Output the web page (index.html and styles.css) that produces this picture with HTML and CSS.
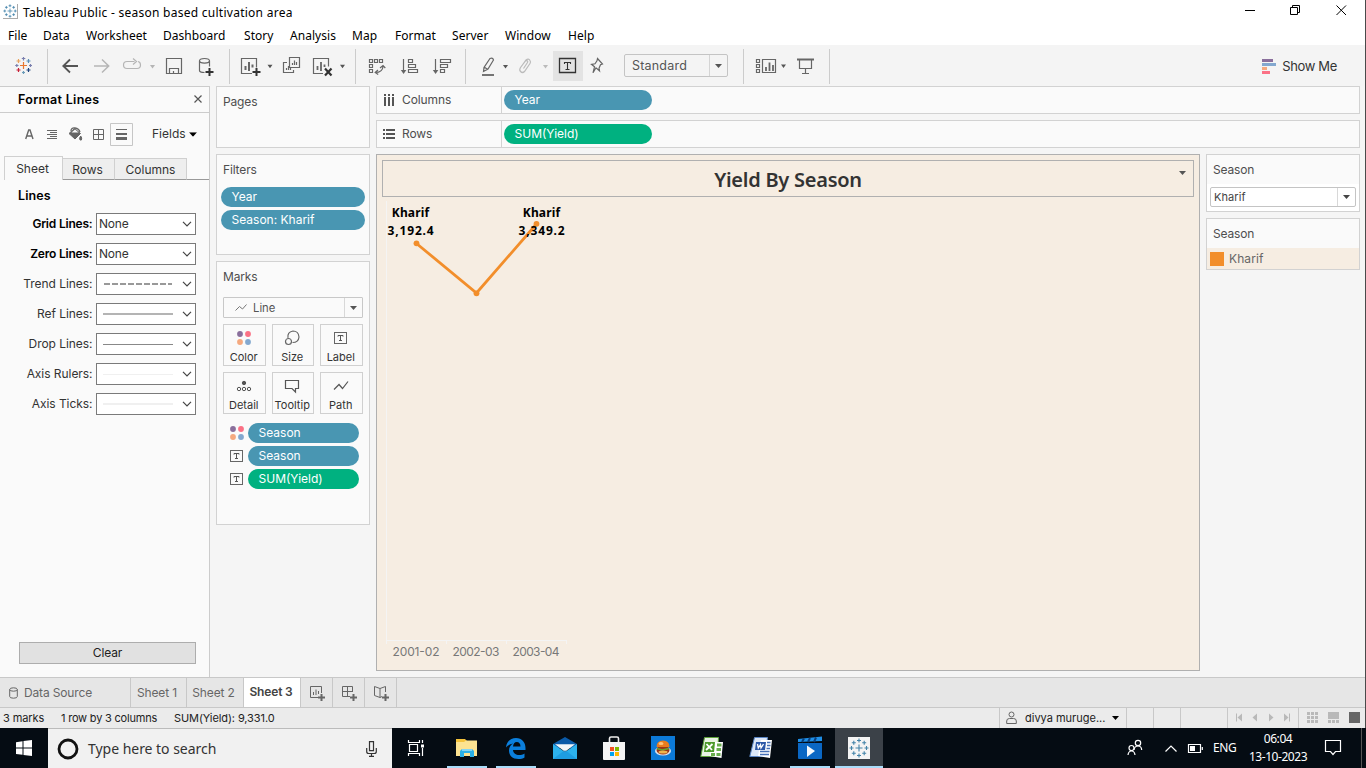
FILE: index.html
```html
<!DOCTYPE html>
<html lang="en">
<head>
<meta charset="utf-8">
<title>Tableau Public - season based cultivation area</title>
<link rel="stylesheet" href="styles.css">
</head>
<body>
<svg class="defs" width="0" height="0">
  <defs>
    <symbol id="caret" viewBox="0 0 7 4"><path d="M0 0h7L3.5 4z" fill="currentColor"/></symbol>
    <symbol id="chev" viewBox="0 0 10 6"><path d="M1 .8l4 4 4-4" fill="none" stroke="#444" stroke-width="1.2"/></symbol>
    <symbol id="dots" viewBox="0 0 14 14"><circle cx="3" cy="3" r="2.9" fill="#8a6f9c"/><circle cx="11" cy="3" r="2.9" fill="#fb7185"/><circle cx="3" cy="11" r="2.9" fill="#f5a97f"/><circle cx="11" cy="11" r="2.9" fill="#83a8cf"/></symbol>
    <symbol id="tbox" viewBox="0 0 13 12"><rect x=".5" y=".5" width="12" height="11" fill="none" stroke="#666"/><path d="M4 4.6V3.5h5v1.1M6.5 3.5v5M5 8.500h3" fill="none" stroke="#555"/></symbol>
    <symbol id="spark" viewBox="0 0 20 20">
      <path d="M10 6.500v7M6.500 10h7M10 .5v4M8 2.500h4M10 15.500v4M8 17.500h4M.5 10h4M2.500 8v4M15.500 10h4M17.500 8v4M4.800 2.800v4M2.800 4.800h4M15.200 2.800v4M13.200 4.800h4M4.800 13.200v4M2.800 15.200h4M15.200 13.200v4M13.200 15.200h4" fill="none" stroke="currentColor" stroke-width="1.100"/>
    </symbol>
  </defs>
</svg>
<div class="app">
  <header class="titlebar">
    <span class="app-icon"><svg width="14" height="14"><use href="#spark"/></svg></span>
    <span class="app-title">Tableau Public - season based cultivation area</span>
    <svg class="win-ctl" width="120" height="24" viewBox="1240 0 120 24" fill="none" stroke="#000">
      <path d="M1245 10.500h10"/>
      <path d="M1290.500 7.500h7v7h-7zM1292.500 7.500v-2h7v7h-2"/>
      <path d="M1336.500 5.500l9.500 9.500M1346 5.500l-9.500 9.500"/>
    </svg>
  </header>
  <nav class="menubar">
    <span class="m1">File</span><span class="m2">Data</span><span class="m3">Worksheet</span><span class="m4">Dashboard</span><span class="m5">Story</span><span class="m6">Analysis</span><span class="m7">Map</span><span class="m8">Format</span><span class="m9">Server</span><span class="m10">Window</span><span class="m11">Help</span>
  </nav>
  <div class="toolbar">
    <div class="group">
      <svg width="47" height="34" viewBox="0 49 47 34" fill="none" stroke-width="1.200">
        <path d="M23.500 62v7M20 65.500h7" stroke="#e8762d"/>
        <path d="M23.500 57v3.500M21.800 58.500h3.500M15.200 65.500h3.300M16.800 64v3M29 65.500h3M30.500 64v3" stroke="#7a7fae"/>
        <path d="M18.500 59v4M16.500 61h4" stroke="#e8a25d"/>
        <path d="M28.500 59v4M26.500 61h4" stroke="#5b8fb5"/>
        <path d="M18.500 68v4M16.500 70h4" stroke="#c72037"/>
        <path d="M28.500 68v4M26.500 70h4" stroke="#1f447e"/>
        <path d="M23.500 71v3M22 72.500h3" stroke="#6b9bb8"/>
      </svg>
    </div>
    <div class="group">
      <svg width="181" height="34" viewBox="48 49 181 34" fill="none" stroke="#666" stroke-width="1.200">
        <path d="M78 66H63.500M70 59.500L63.300 66l6.700 6.500" stroke="#555" stroke-width="1.800"/>
        <path d="M94 66h14.500M102 59.500l6.700 6.500-6.700 6.500" stroke="#b5b5b5" stroke-width="1.500"/>
        <path d="M131 61.500h-4q-3.500 0-3.500 3.500t3.500 3.500h10q3.500 0 3.500-3.500 0-3-2.500-3.500M131 61.500h3.500M133 58.500l3.500 3-3.500 3" stroke="#b5b5b5"/>
        <path d="M150 65h5l-2.500 3.500z" fill="#b5b5b5" stroke="none"/>
        <path d="M166.500 58.500h15v15h-15zM169.500 73.500v-5h9v5M173.500 73v-2"/>
        <ellipse cx="204.500" cy="60.800" rx="5" ry="2.300"/><path d="M199.500 61v9.500q0 2 5 2M209.500 61v5.500"/>
        <path d="M209.500 68v8M205.500 72h8" stroke="#333" stroke-width="2"/>
      </svg>
    </div>
    <div class="group">
      <svg width="125" height="34" viewBox="230 49 125 34" fill="none" stroke="#666" stroke-width="1.200">
        <path d="M252 73.500h-10.500v-15h15v9"/><path d="M245.500 66v4M249 62v9M252.500 64.500v3" stroke-width="2"/>
        <path d="M256.500 68v8M252.500 72h8" stroke="#333" stroke-width="2"/>
        <path d="M267.500 64.800h5l-2.500 3.500zM340 64.800h5l-2.500 3.500z" fill="#555" stroke="none"/>
        <path d="M289.500 57.500h10v10h-10zM287 62.500h-3.500v10h10V70M292.500 65v-2M294.500 65v-4.500M296.500 65v-3M286.500 70v-2M288.500 70v-4M290.500 70v-3"/>
        <path d="M323 73.500h-9.500v-15h15v8"/><path d="M317.500 66v4M321 62v9M324.500 64.500v2.500" stroke-width="1.800"/>
        <path d="M325 68.500l6.500 7M331.500 68.500l-6.500 7" stroke="#333" stroke-width="2.200"/>
      </svg>
    </div>
    <div class="group">
      <svg width="109" height="34" viewBox="356 49 109 34" fill="none" stroke="#666" stroke-width="1.200">
        <path d="M369.500 59.500h3v3h-3zM374.500 59.500h3v3h-3zM379.500 59.500h3v3h-3zM369.500 64.500h3v3h-3zM369.500 69.500h3v3h-3zM375.500 72.500q7 0 7.500-6M378 70l-2.800 2.500 3 2M380 68l3-2.500 2.300 2.500"/>
        <path d="M403.500 59v13M408.500 59.500h4v3h-4zM408.500 64.500h7v3h-7zM408.500 69.500h9v3h-9z"/><path d="M400.800 70h5.500l-2.700 4z" fill="#666" stroke="none"/>
        <path d="M435.500 59v13M440.500 59.500h10v3h-10zM440.500 64.500h7v3h-7zM440.500 69.500h4v3h-4z"/><path d="M432.800 70h5.500l-2.700 4z" fill="#666" stroke="none"/>
      </svg>
    </div>
    <div class="group marks-group">
      <svg width="152" height="34" viewBox="466 49 152 34" fill="none" stroke="#666" stroke-width="1.200">
        <path d="M553 51h30v30h-30z" fill="#e3e3e3" stroke="none"/>
        <path d="M483.500 71.500l.5-4 6-9q3-1 3.500 1.500l-5.500 9zM484 67l4 2.500"/>
        <path d="M482 75h12" stroke-width="1.800"/>
        <path d="M503 65h5l-2.500 3.500z" fill="#555" stroke="none"/>
        <path d="M521 67l5-7q2.500-2 4 .5 1 1.500 0 3l-5.500 8q-2 2-4 0-1.500-1.500 0-4l5-6.500q1-1 2 0 .5.800 0 1.500l-4 6" stroke="#bbb"/>
        <path d="M543 65h5l-2.500 3.500z" fill="#bbb" stroke="none"/>
        <path d="M559.500 58.500h16v14h-16z" stroke="#333" stroke-width="1.300"/>
        <path d="M564.500 64v-1.500h6V64M567.500 62.500v7M565.500 69.500h4" stroke="#333" stroke-width="1.100"/>
        <path d="M597.500 58.500l5 5.500-2 .8-1.500 3.500.5 2.500-3.500-3-3 5 1.500-6-3-2.500 3.500-.5 2-3z"/>
      </svg>
      <div class="fit"><span>Standard</span><i><svg width="7" height="4"><use href="#caret"/></svg></i></div>
    </div>
    <div class="group">
      <svg width="85" height="34" viewBox="744 49 85 34" fill="none" stroke="#666" stroke-width="1.200">
        <path d="M756.500 59.500h3v3h-3zM756.500 64.500h3v3h-3zM756.500 69.500h3v3h-3zM762.500 59.500h13v13h-13z"/><path d="M766 67v4M769.500 62.500V71M773 65v6" stroke-width="1.800"/>
        <path d="M781 64.500h5l-2.500 3.500z" fill="#555" stroke="none"/>
        <path d="M797 59.500h17" stroke-width="2"/><path d="M799.500 60v8.500h12V60M805.500 69v4M802 73.500h7"/>
      </svg>
    </div>
    <div class="showme">
      <svg width="14" height="15"><path fill="#8a6f9c" d="M0 0h11v3H0z"/><path fill="#83a8cf" d="M0 4h14v3H0z"/><path fill="#f5a97f" d="M0 8h5v3H0z"/><path fill="#fb7185" d="M0 12h8v3H0z"/></svg>
      <span>Show Me</span>
    </div>
  </div>

  <main class="work">
    <aside class="format">
      <div class="format-head"><b>Format Lines</b><svg width="8" height="8"><path d="M.5.5l7 7M7.500.5l-7 7" stroke="#555" stroke-width="1.200"/></svg></div>
      <div class="format-tools">
        <svg width="134" height="23" viewBox="0 123 134 23" fill="none" stroke="#666">
          <path d="M25.700 139l3-9h1.300l3 9M26.800 136h5" stroke-width="1.400"/>
          <path d="M47 130.500h10M50 132.500h7M47 134.500h10M50 136.500h7M47 138.500h10" stroke-width="1"/>
          <path d="M69 133.500l5.500-5 6 5-5.500 5.500z" fill="#666"/><path d="M71 131q0-3.500 4-3t5 4" stroke-width="1.300"/><path d="M71.500 132.500l3.500-3 3.500 3z" fill="#fafafa" stroke="none"/><path d="M80 140q-1-2 .7-4 1.700 2 .7 4z" fill="#666"/>
          <path d="M93.500 129.500h10v10h-10zM98.500 129.500v10M93.500 134.500h10"/>
          <path d="M110.500 123.500h22v22h-22z" stroke="#c6c6c6"/>
          <path d="M116 129.500h11" stroke-width="1"/><path d="M116 134h11" stroke-width="2"/><path d="M116 138.500h11" stroke-width="3"/>
        </svg>
        <span class="fields">Fields</span><svg width="8" height="5" viewBox="0 0 7 4"><use href="#caret"/></svg>
      </div>
      <div class="format-tabs"><span class="on">Sheet</span><span class="t2">Rows</span><span class="t3">Columns</span><em></em></div>
      <h3>Lines</h3>
      <div class="line-row"><label class="b">Grid Lines:</label><div class="combo"><span>None</span><svg width="10" height="6"><use href="#chev"/></svg></div></div>
      <div class="line-row"><label class="b">Zero Lines:</label><div class="combo"><span>None</span><svg width="10" height="6"><use href="#chev"/></svg></div></div>
      <div class="line-row"><label>Trend Lines:</label><div class="combo"><hr class="dash"><svg width="10" height="6"><use href="#chev"/></svg></div></div>
      <div class="line-row"><label>Ref Lines:</label><div class="combo"><hr class="ref"><svg width="10" height="6"><use href="#chev"/></svg></div></div>
      <div class="line-row"><label>Drop Lines:</label><div class="combo"><hr class="drop"><svg width="10" height="6"><use href="#chev"/></svg></div></div>
      <div class="line-row"><label>Axis Rulers:</label><div class="combo"><hr class="rule"><svg width="10" height="6"><use href="#chev"/></svg></div></div>
      <div class="line-row"><label>Axis Ticks:</label><div class="combo"><hr class="tick"><svg width="10" height="6"><use href="#chev"/></svg></div></div>
      <button class="clear">Clear</button>
    </aside>

    <section class="cards">
      <div class="card pages"><h4>Pages</h4></div>
      <div class="card filters"><h4>Filters</h4><div class="pill">Year</div><div class="pill">Season: Kharif</div></div>
      <div class="card marks">
        <h4>Marks</h4>
        <div class="mark-type"><svg width="12" height="9"><path d="M.5 7.500l4-4 3 2.500 4-4.500" fill="none" stroke="#777"/></svg><span>Line</span><i><svg width="7" height="4"><use href="#caret"/></svg></i></div>
        <div class="mark-grid">
          <div><svg width="16" height="16" viewBox="-1 -1 16 16"><use href="#dots" width="14" height="14"/></svg><span>Color</span></div>
          <div><svg width="16" height="16" fill="none" stroke="#666" stroke-width="1.200"><path d="M4 7.800q-1-5.500 5-6.800 5.500 0 6 6-.5 5.500-6.500 5.500M1.500 11.500a3 3 0 0 0 6 0 3 3 0 0 0-6 0z"/></svg><span>Size</span></div>
          <div><svg width="13" height="16" viewBox="0 -2 13 16"><use href="#tbox" width="13" height="12"/></svg><span>Label</span></div>
          <div><svg width="16" height="16" fill="none" stroke="#555"><circle cx="8" cy="5" r="1.700" fill="#555"/><circle cx="3" cy="11" r="1.700"/><circle cx="8" cy="11" r="1.700"/><circle cx="13" cy="11" r="1.700"/></svg><span>Detail</span></div>
          <div><svg width="16" height="16" fill="none" stroke="#555" stroke-width="1.200"><path d="M1.500 2.500h13v8h-3v3.500l-3.500-3.500H1.500z"/></svg><span>Tooltip</span></div>
          <div><svg width="16" height="16" fill="none" stroke="#555" stroke-width="1.200"><path d="M1 11.500l5-5 3.500 4 5.500-7"/></svg><span>Path</span></div>
        </div>
        <div class="mark-row"><svg width="14" height="14"><use href="#dots"/></svg><div class="pill">Season</div></div>
        <div class="mark-row"><svg width="14" height="12"><use href="#tbox" width="13"/></svg><div class="pill">Season</div></div>
        <div class="mark-row"><svg width="14" height="12"><use href="#tbox" width="13"/></svg><div class="pill green">SUM(Yield)</div></div>
      </div>
    </section>

    <section class="sheet">
      <div class="shelf"><div class="shelf-name"><svg width="14" height="12" fill="#555"><path d="M2 0h2v2H2zM6 0h2v2H6zM10 0h2v2h-2zM2 3h2v9H2zM6 3h2v9H6zM10 3h2v9h-2z"/></svg><span>Columns</span></div><div class="pill">Year</div></div>
      <div class="shelf"><div class="shelf-name"><svg width="14" height="12" fill="#555"><path d="M1 1h2v2H1zM1 5h2v2H1zM1 9h2v2H1zM4 1h9v2H4zM4 5h9v2H4zM4 9h9v2H4z"/></svg><span>Rows</span></div><div class="pill green">SUM(Yield)</div></div>
      <div class="sheet-body">
        <div class="viz">
          <div class="viz-title"><h1>Yield By Season</h1><svg class="viz-caret" width="7" height="4"><use href="#caret"/></svg></div>
          <svg class="chart" width="812" height="466" viewBox="382 198 812 466">
            <path d="M386.500 201v443M386 640.500h181M446.500 641v3M506.500 641v3M566.500 641v3" stroke="#f4f4f4" fill="none"/>
            <path d="M416.500 243.500l60 49.500 60-69" fill="none" stroke="#f28e2b" stroke-width="2.800"/>
            <g fill="#f28e2b"><circle cx="416.500" cy="243.300" r="2.900"/><circle cx="476.500" cy="293.300" r="2.900"/><circle cx="536.500" cy="223.800" r="2.900"/></g>
            <g class="val" text-anchor="middle"><text x="410.500" y="217">Kharif</text><text class="num" x="411" y="235">3,192.4</text><text x="541.500" y="217">Kharif</text><text class="num" x="542" y="235">3,349.2</text></g>
            <g class="axis"><text x="392.500" y="656" textLength="47">2001-02</text><text x="452.500" y="656" textLength="47">2002-03</text><text x="512.500" y="656" textLength="47">2003-04</text></g>
          </svg>
        </div>
        <div class="side">
          <div class="card filter-card"><h4>Season</h4><div class="pick-wrap"><div class="pick"><span>Kharif</span><i><svg width="7" height="4"><use href="#caret"/></svg></i></div></div></div>
          <div class="card legend"><h4>Season</h4><div class="legend-row"><i></i><span>Kharif</span></div></div>
        </div>
      </div>
    </section>
  </main>

  <div class="tabs">
    <span class="ds"><svg width="9" height="12" fill="none" stroke="#666"><ellipse cx="4.500" cy="2.500" rx="3.800" ry="1.700"/><path d="M.7 2.500v7q0 1.700 3.800 1.700t3.800-1.700v-7"/></svg>Data Source</span><span class="s1">Sheet 1</span><span class="s2">Sheet 2</span><span class="s3">Sheet 3</span>
    <span class="ico"><svg width="18" height="17" fill="none" stroke="#666"><path d="M11 12.500H1.500v-11h11V8M4.500 7v3M7 4.500V10M9.500 6v3"/><path d="M12.500 9v7M9 12.500h7" stroke-width="2"/></svg></span>
    <span class="ico"><svg width="18" height="17" fill="none" stroke="#666"><path d="M9 11.500H1.500v-10h10V7M6.500 1.500v10M1.500 6.500h10"/><path d="M12.500 9v7M9 12.500h7" stroke-width="2"/></svg></span>
    <span class="ico"><svg width="18" height="17" fill="none" stroke="#666"><path d="M9 11.500l-2 1-5.500-2v-9l5.500 2 5.500-2V7M7 3.500v9"/><path d="M12.500 9v7M9 12.500h7" stroke-width="2"/></svg></span>
  </div>
  <footer class="status">
    <span class="st1">3 marks</span><span class="st2">1 row by 3 columns</span><span class="st3">SUM(Yield): 9,331.0</span>
    <div class="user"><svg width="11" height="14" fill="none" stroke="#666"><circle cx="5.500" cy="3.500" r="2.500"/><path d="M.7 12.500V10q0-2.500 2.800-2.500h4q2.800 0 2.800 2.500v2.500z"/></svg><span>divya muruge...</span><svg width="7" height="4"><use href="#caret"/></svg></div>
    <div class="cell"></div><div class="cell"></div><div class="cell wide"></div>
    <svg width="70" height="20" viewBox="1228 708 70 20" fill="#b9b9b9"><path d="M1236 713.500h1v8h-1zM1242 713.500v8l-4.500-4zM1257 713.500v8l-4.500-4zM1269 713.500v8l4.500-4zM1284 713.500v8l4.500-4zM1289 713.500h1v8h-1z"/></svg>
    <div class="views"><svg width="66" height="20" viewBox="1299 708 66 20" fill="#b9b9b9"><path d="M1307 712h3v3h-3zM1311 712h3v3h-3zM1315 712h3v3h-3zM1307 716h3v3h-3zM1311 716h3v3h-3zM1315 716h3v3h-3zM1307 720h3v3h-3zM1311 720h3v3h-3zM1315 720h3v3h-3zM1328 712h11v7h-11zM1328 720h3v3h-3zM1332 720h3v3h-3zM1336 720h3v3h-3z"/><path fill="#666" d="M1349 712h11v11h-11z"/></svg></div>
  </footer>
</div>

<div class="taskbar">
  <div class="start"><svg width="16" height="16" fill="#fff"><path d="M0 2.200l6.500-1v6.300H0zM7.500 1l8.500-1v7.500H7.500zM0 8.500h6.500v6.300L0 14zM7.500 8.500H16V16l-8.500-1.100z"/></svg></div>
  <div class="search"><svg width="22" height="22"><circle cx="11" cy="11" r="9" fill="none" stroke="#111" stroke-width="2.800"/></svg><span>Type here to search</span><svg width="11" height="16" fill="none" stroke="#333" stroke-width="1.200"><path d="M3.500.7h4v9h-4zM.7 7v3.500q0 2 2 2h5.600q2 0 2-2V7M5.500 12.500V15M3 15.300h5"/></svg></div>
  <div class="tb first"><svg width="18" height="16" fill="none" stroke="#fff" stroke-width="1.200"><path d="M2.500 4.500h8v7h-8zM1.500 0v2.500h11V0M1.500 16v-2.500h11V16M15.500 0v3M15.500 8v8"/><path d="M14 4.500h3v3h-3z" fill="#fff" stroke="none"/></svg></div>
  <div class="tb run"><svg width="24" height="20"><path fill="#f5c33b" d="M1 1h9l2 2h10v5H1z"/><path fill="#fde391" d="M1 4h8l2-1.500h11V18H1z"/><path fill="#2bb0e6" d="M5 19v-6l2-2h10l2 2v6h-4v-4H9v4z"/><path fill="#85d5f3" d="M7 11h10v2H7z"/></svg></div>
  <div class="tb run"><svg width="22" height="22"><path fill="#0b7fdc" d="M1 10.500C1.500 4.500 5.500 1 11 1c6 0 9.500 4.500 9.500 10v2H8c.3 3.500 3 5 6 5 2 0 4-.6 5.500-1.600v4C18 21.500 15.800 22 13.500 22 7.500 22 4 18.500 4 13.500c0-3 1.500-5.500 4-7-3 .5-5.500 2-7 4zM8 9.500h7.500c0-3-1.500-4.500-3.700-4.500C9.500 5 8.300 7 8 9.500z"/></svg></div>
  <div class="tb"><svg width="24" height="24"><path fill="#0a5aa8" d="M0 8L12 1l12 7v4H0z"/><path fill="#2cb1ec" d="M0 8l12 8 12-8v15H0z"/><path fill="#f3f6f9" d="M2 8.300h20l-10 7.500z"/><path fill="#1690da" d="M0 23l12-9 12 9z" opacity=".6"/></svg></div>
  <div class="tb"><svg width="24" height="26"><path d="M7.500 7V3.500q0-1.500 1.500-1.500h6q1.500 0 1.500 1.500V7" fill="none" stroke="#eee" stroke-width="1.600"/><path fill="#f4f4f4" d="M1 7h22v17q0 1-1 1H2q-1 0-1-1z"/><path fill="#f25022" d="M8 12h4v4H8z"/><path fill="#7fba00" d="M13 12h4v4h-4z"/><path fill="#00a4ef" d="M8 17h4v4H8z"/><path fill="#ffb900" d="M13 17h4v4h-4z"/></svg></div>
  <div class="tb"><svg width="24" height="24"><path fill="#0c7ad8" d="M0 0h24v24H0z"/><ellipse cx="12" cy="15" rx="8" ry="4.500" fill="#dfe5ee"/><ellipse cx="12" cy="14" rx="6.500" ry="4.500" fill="#9a3417"/><path fill="#e87c1e" d="M5.500 11q0-6.500 6.500-6.500t6.500 6.500z"/><ellipse cx="10" cy="7.500" rx="2.500" ry="1.500" fill="#ffc27a"/><path d="M6 12.500l5 1.500 7-1.500" fill="none" stroke="#6aa52c" stroke-width="1.400"/><ellipse cx="12" cy="16" rx="4.500" ry="1.500" fill="#efb34d"/></svg></div>
  <div class="tb"><svg width="24" height="24"><path fill="#e9f3e4" stroke="#5ea33a" d="M4.500 1.500h14l-1 19H.8z"/><path fill="#fff" d="M15 6h8l-1.500 16-12-2 1-5h4z"/><path fill="#4c9a2a" d="M5 6h10l-1 10H4z"/><path d="M6.500 8l5.500 6M12.500 8L6 14" stroke="#fff" stroke-width="1.800"/><path d="M17 7.500h4.500v3H17zM16.500 12H21v3h-4.500zM11 17h4v3h-4zM16.500 17h4v3h-4z" fill="#69ad4e"/></svg></div>
  <div class="tb"><svg width="24" height="24"><path fill="#dce7f7" stroke="#5b86c5" d="M5.500 1.500h13l-2 19H.8z"/><path fill="#fff" d="M12 4h11l-2 18-12-2z"/><path fill="#2b57a7" d="M7 6h10l-1 8H6z"/><path d="M8.500 8l.8 4 2.200-3.500.5 3.500 2.500-4" fill="none" stroke="#fff" stroke-width="1.300"/><path d="M18 6.500h3.500M18 9.500h3.500M17.500 12.500H21M11 15.500h9.500M11 18.500h9" stroke="#456fb6" stroke-width="1.500"/></svg></div>
  <div class="tb run"><svg width="24" height="24"><path fill="#0a67c4" d="M0 7h24v15q0 1-1 1H1q-1 0-1-1z"/><path fill="#1f8fe6" d="M0 3l24-2.500V5L0 6z"/><path d="M6 2.500L4 6M12 2L10 6M18 1.500L16 6" stroke="#0a3f7d" stroke-width="2"/><path fill="#f5f9fd" d="M9 9.500l8 5.500-8 6z"/></svg></div>
  <div class="tb run active"><span><svg width="20" height="20"><use href="#spark"/></svg></span></div>
  <svg class="tray" width="90" height="40" viewBox="1120 728 90 40" fill="none" stroke="#fff" stroke-width="1.200">
    <circle cx="1138" cy="743" r="2.700"/><path d="M1134 750q.5-4 4-4t3.700 4"/><circle cx="1131.500" cy="748" r="2.500"/><path d="M1128 755q.5-4 3.500-4t3.500 4"/>
    <path d="M1165.500 751.500l5.500-5.500 5.500 5.500"/>
    <path d="M1188.500 744.500h12v8h-12zM1202.300 747v3"/><path d="M1190 746h5v5h-5z" fill="#fff" stroke="none"/>
  </svg>
  <span class="lang">ENG</span>
  <div class="clock"><span>06:04</span><span>13-10-2023</span></div>
  <svg class="note" width="18" height="17" fill="none" stroke="#fff" stroke-width="1.200"><path d="M1.500 1.500h15v11h-5l-2.500 3-2.500-3h-5z"/></svg>
  <i class="peek"></i>
</div>
</body>
</html>
```
FILE: styles.css
```css
* { box-sizing: border-box; }
body { margin: 0; width: 1366px; height: 768px; overflow: hidden; font: 12px/16px Inter, "Noto Sans", sans-serif; color: #333; background: #f5f5f5; }
svg { display: block; flex: none; }
span, b, label { white-space: nowrap; }
i { font-style: normal; }
.defs { display: none; }
.app { height: 728px; display: flex; flex-direction: column; border-right: 1px solid #4a4a4a; }

.titlebar { height: 24px; background: #fff; display: flex; align-items: center; padding-left: 3px; font: 12px/16px "Noto Sans", sans-serif; color: #000; }
.app-icon { width: 15px; height: 15px; border: solid #aaa; border-width: 0 1px 1px 0; color: #3d80a8; margin-top: -1px; }
.app-title { margin-left: 5px; padding-top: 1px; letter-spacing: .26px; }
.win-ctl { margin-left: auto; margin-right: 5px; }
.menubar { height: 21px; background: #fff; display: flex; padding: 4px 0 0 8px; font: 12px/16px "Noto Sans", sans-serif; color: #000; letter-spacing: .04px; }
.m1 { width: 35px; } .m2 { width: 43px; } .m3 { width: 77px; } .m4 { width: 81px; } .m5 { width: 46px; } .m6 { width: 62px; } .m7 { width: 43px; } .m8 { width: 57px; } .m9 { width: 53px; } .m10 { width: 63px; }

.toolbar { height: 41px; background: #f4f4f4; display: flex; padding-top: 4px; }
.group { height: 35px; border-right: 1px solid #ccc; display: flex; }
.marks-group { width: 278px; }
.fit { width: 104px; height: 23px; margin: 5px 0 0 6px; border: 1px solid #c4c4c4; border-radius: 2px; display: flex; color: #555; }
.fit span { flex: 1; padding: 3px 0 0 7px; font-size: 12.5px; letter-spacing: .2px; }
.fit i { width: 18px; border-left: 1px solid #d4d4d4; display: grid; place-items: center; }
.showme { margin-left: auto; margin-right: 28px; display: flex; height: 34px; align-items: center; gap: 6px; font-size: 13px; letter-spacing: -.35px; }

.work { height: 591px; display: flex; }
.format { width: 210px; background: #fafafa; border: 1px solid #ccc; border-left: 0; border-bottom: 0; display: flex; flex-direction: column; color: #333; }
.format-head { height: 26px; display: flex; align-items: center; justify-content: space-between; padding: 0 7px 1px 18px; border-bottom: 1px solid #ccc; color: #000; }
.format-head b { font-weight: 600; font-size: 12.5px; letter-spacing: .3px; padding-top: 1px; }
.format-tools { display: flex; height: 43px; padding-top: 10px; }
.fields { margin: 3px 3px 0 18px; }
.format-tools > svg:last-child { margin-top: 9px; color: #000; }
.format-tabs { display: flex; height: 24px; align-items: flex-end; padding-left: 4px; font-size: 12px; }
.format-tabs span { height: 22px; border: 1px solid #d0d0d0; border-width: 1px 1px 1px 0; border-bottom-color: #999; background: #eee; text-align: center; line-height: 22px; width: 72px; }
.format-tabs .on { height: 24px; width: 59px; border-width: 1px 1px 0; background: #fafafa; line-height: 24px; padding-right: 2px; }
.format-tabs .t2 { width: 52px; padding-right: 2px; }
.format-tabs em { flex: 1; border-bottom: 1px solid #999; }
.format h3 { margin: 7px 0 9px 18px; font: 600 12.5px/17px Inter, sans-serif; color: #000; letter-spacing: .1px; }
.line-row { display: flex; height: 22px; margin-bottom: 8px; justify-content: flex-end; align-items: center; gap: 4px; padding-right: 13px; letter-spacing: -.05px; }
.line-row .b { font-weight: 600; color: #000; letter-spacing: -.2px; }
.line-row label { margin-right: -.5px; }
.combo { width: 100px; height: 22px; border: 1px solid #7a7a7a; background: #fff; display: flex; align-items: center; justify-content: space-between; padding: 0 3px 0 2px; letter-spacing: -.2px; }
.combo hr { width: 70px; height: 0; margin: 0 0 0 4px; border: 0; border-top: 1px solid #888; }
.combo .dash { height: 2px; border: 0; width: 68px; margin-left: 5px; background: repeating-linear-gradient(90deg, #999 0 6px, #fff 6px 8px); }
.combo .ref { border-top: 2px solid #b4b4b4; }
.combo .rule, .combo .tick { border-color: #f0f0f0; }
.combo .tick { border-width: 2px; }
.clear { margin: auto 13px 13px 19px; height: 22px; border: 1px solid #adadad; background: #e1e1e1; font: 12px/16px Inter, sans-serif; color: #222; padding: 0; letter-spacing: -.1px; }

.cards { margin-left: 6px; width: 154px; display: flex; flex-direction: column; gap: 6px; }
.card { background: #fafafa; border: 1px solid #d2d2d2; }
h4 { margin: 0; font: 12px/16px Inter, sans-serif; color: #4e4e4e; padding: 7px 0 0 6px; letter-spacing: -.15px; }
.pages { height: 62px; }
.filters { height: 101px; padding: 0 4px; }
.filters h4 { padding: 7px 0 9px 2px; }
.pill { height: 20px; border-radius: 10px; background: #4996b2; color: #fff; line-height: 20px; padding-left: 10.5px; white-space: nowrap; letter-spacing: 0; }
.filters .pill { margin-bottom: 3px; }
.pill.green { background: #00b180; }
.marks { height: 264px; }
.mark-type { margin: 12px 6px 6px; height: 21px; border: 1px solid #c8c8c8; border-radius: 1px; display: flex; align-items: center; padding-left: 11px; color: #555; }
.mark-type span { flex: 1; padding-left: 6px; font-size: 11.3px; }
.mark-type i, .pick i { width: 18px; align-self: stretch; border-left: 1px solid #d8d8d8; display: grid; place-items: center; }
.mark-grid { display: grid; grid-template-columns: 43px 42px 43px; gap: 6px; padding-left: 6px; }
.mark-grid div { height: 42px; border: 1px solid #d0d0d0; display: flex; flex-direction: column; align-items: center; padding: 5px 1.5px 0 0; gap: 3px; font-size: 11px; color: #333; }
.mark-row { display: flex; align-items: center; gap: 4px; padding: 0 10px 0 13px; margin-bottom: 3px; }
.mark-grid + .mark-row { margin-top: 9px; }
.mark-row .pill { flex: 1; }

.sheet { margin-left: 6px; width: 984px; display: flex; flex-direction: column; gap: 6px; }
.shelf { height: 28px; border: 1px solid #d2d2d2; background: #fafafa; display: flex; align-items: center; }
.shelf-name { width: 125px; height: 26px; border-right: 1px solid #d2d2d2; display: flex; align-items: center; padding-left: 5px; gap: 6px; color: #4e4e4e; letter-spacing: -.1px; }
.shelf .pill { width: 148px; margin-left: 2px; }
.sheet-body { display: flex; gap: 6px; }
.viz { width: 824px; height: 517px; border: 1px solid #b0b0b0; background: #f6ede2; padding: 5px; }
.viz-title { height: 37px; border: 1px solid #b0b0b0; display: flex; justify-content: center; position: relative; }
.viz-title h1 { margin: 0; font: 600 20px/36px "Noto Sans", sans-serif; color: #333; padding-top: 1px; letter-spacing: -.25px; }
.viz-caret { position: absolute; right: 7px; top: 10px; color: #555; }
.chart { margin-top: 1px; }
.val { font: 700 12px "Noto Sans", sans-serif; fill: #000; letter-spacing: .15px; }
.val .num { letter-spacing: .85px; }
.axis { font: 12px Inter, sans-serif; fill: #787878; }
.side { width: 154px; display: flex; flex-direction: column; gap: 6px; }
.filter-card { height: 58px; }
.pick-wrap { margin-top: 6px; background: #fff; height: 27px; padding: 3px; }
.pick { height: 20px; border: 1px solid #c4c4c4; border-radius: 2px; display: flex; font-size: 11px; color: #444; }
.pick span { flex: 1; padding: 1px 0 0 3px; letter-spacing: .1px; }
.legend { height: 52px; }
.legend-row { margin-top: 6px; height: 21px; background: #f6ede2; display: flex; align-items: center; padding-left: 3px; gap: 5px; color: #666; letter-spacing: .1px; }
.legend-row i { width: 14px; height: 14px; background: #f28e2b; }

.tabs { height: 31px; border: 1px solid #c8c8c8; border-width: 1px 0; background: #e6e6e6; display: flex; color: #666; letter-spacing: -.15px; }
.tabs span { border-right: 1px solid #c8c8c8; display: flex; align-items: center; justify-content: center; padding: 1px 3px 0 0; }
.tabs .ds { width: 131px; justify-content: flex-start; padding: 0 0 0 9px; gap: 6px; }
.s1 { width: 56px; } .s2 { width: 57px; }
.tabs .s3 { width: 57px; background: #fff; font-weight: 600; color: #444; padding: 0 2px 2px 0; }
.tabs .ico { width: 32px; padding: 1px 0 0 2px; }
.status { height: 20px; background: #ebebeb; display: flex; line-height: 20px; font-size: 11px; color: #222; padding-left: 3px; }
.st1 { width: 58px; letter-spacing: -.1px; } .st2 { width: 113px; letter-spacing: -.2px; } .st3 { width: 825px; letter-spacing: -.1px; }
.user { width: 127px; border-left: 1px solid #c8c8c8; display: flex; align-items: center; padding-left: 6px; font-size: 11px; }
.user span { width: 95px; padding-left: 8px; }
.user svg:last-child { color: #000; }
.cell { width: 27px; border-left: 1px solid #c8c8c8; }
.wide { width: 48px; border-right: 1px solid #c8c8c8; }
.views { border-left: 1px solid #c8c8c8; }

.taskbar { height: 40px; background: #050c13; display: flex; color: #fff; }
.start { width: 48px; display: grid; place-items: center; }
.search { width: 344px; background: #f1f1f1; border-top: 1px solid #bbb; display: flex; align-items: center; padding: 0 15px 0 9px; font: 14px/20px "Noto Sans", sans-serif; color: #333; }
.search span { flex: 1; padding-left: 9px; letter-spacing: -.03px; }
.tb { width: 48px; margin-right: 1px; display: grid; place-items: center; }
.first { margin-right: 3px; }
.run { background: linear-gradient(#a9dcf9, #a9dcf9) 50% 100% / 40px 2px no-repeat; }
.active { background: linear-gradient(#a9dcf9, #a9dcf9) 50% 100% / 48px 2px no-repeat #3b4148; }
.active span { background: #f4f4f4; padding: 1px; color: #4283a8; }
.tray { margin-left: 236px; }
.lang { width: 36px; padding-left: 3px; line-height: 39px; font-family: "Noto Sans", sans-serif; font-size: 12px; letter-spacing: -.4px; }
.clock { width: 64px; display: flex; flex-direction: column; align-items: center; font: 12px/18px "Noto Sans", sans-serif; letter-spacing: -.45px; padding-top: 2px; }
.note { margin: 11px 0 0 14px; }
.peek { margin-left: auto; width: 5px; border-left: 1px solid #555; }
```
